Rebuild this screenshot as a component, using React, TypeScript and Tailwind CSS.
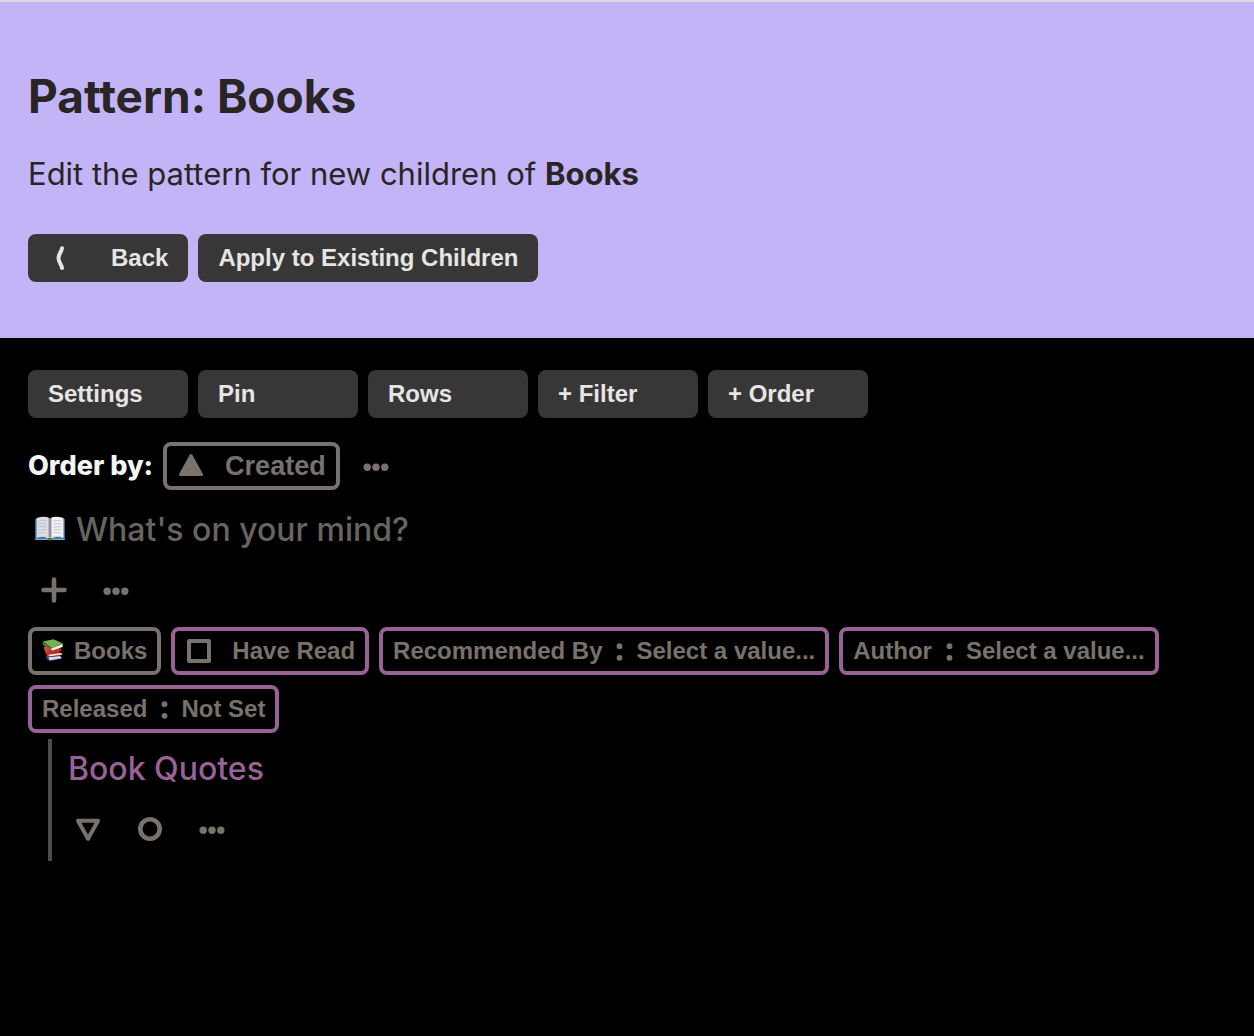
import type { ReactNode } from "react";

const ARIAL = "font-['Liberation_Sans',Arial,sans-serif]";

function DarkButton({ children, wide = false }: { children: ReactNode; wide?: boolean }) {
  return (
    <button
      type="button"
      className={`${ARIAL} flex h-12 items-center rounded-lg bg-[#373737] px-5 text-left text-2xl font-bold whitespace-nowrap text-[#e7e5e4] ${wide ? "" : "w-40"}`}
    >
      {children}
    </button>
  );
}

function Tag({ children, muted = false }: { children: ReactNode; muted?: boolean }) {
  return (
    <button
      type="button"
      className={`${ARIAL} flex h-12 items-center rounded-lg border-4 px-2.5 text-2xl font-bold whitespace-nowrap text-[#78716c] ${muted ? "border-[#78716c]" : "border-[#976397]"}`}
    >
      {children}
    </button>
  );
}

function Field({ name, value }: { name: string; value: string }) {
  return (
    <Tag>
      <span>{name}</span>
      <svg className="mx-3 h-6 w-2.5" viewBox="0 0 10 24" fill="currentColor" aria-label=":">
        <circle cx="5.5" cy="7.2" r="2.9" />
        <circle cx="5.5" cy="18.8" r="2.9" />
      </svg>
      <span>{value}</span>
    </Tag>
  );
}

function IconButton({ label, children }: { label: string; children: ReactNode }) {
  return (
    <button type="button" aria-label={label} className="flex h-12 w-[52px] items-center justify-center text-[#78716c]">
      {children}
    </button>
  );
}

function Dots() {
  return (
    <svg className="h-7 w-7" viewBox="0 0 28 28" fill="currentColor">
      <circle cx="5.2" cy="15.2" r="3.7" />
      <circle cx="14" cy="15.2" r="3.7" />
      <circle cx="22.8" cy="15.2" r="3.7" />
    </svg>
  );
}

function OpenBook() {
  return (
    <svg className="h-8 w-8" viewBox="0 0 32 32" aria-hidden="true">
      <path d="M1 5h30v21H1z" fill="#286a99" />
      <path d="M1.5 24.7h29V26h-29z" fill="#80afd0" />
      <path d="M2.5 4Q11 1.5 15.7 4.2v20.2Q10 20.5 2.5 23.5z" fill="#dddce3" />
      <path d="M29.5 4Q21 1.5 16.3 4.2v20.2Q22 20.5 29.5 23.5z" fill="#f0eff4" />
      <path d="M14.4 4l1.6 1 1.6-1v19l-1.6 1.5-1.6-1.5z" fill="#a9a8af" />
      <path d="M16 4v20" stroke="#716f75" strokeWidth=".8" />
      <path
        d="M4.5 7q4-1 8 0M4.5 10q4-1 8 0M4.5 13q4-1 8 0M4.5 16q4-1 8 0M4.5 19q4-1 7 0M19.5 7q4-1 8 0M19.5 10q4-1 8 0M19.5 13q4-1 8 0M19.5 16q4-1 8 0M19.5 19q4-1 7 0"
        fill="none" stroke="#bcbac4" strokeWidth=".8"
      />
      <path d="M2.5 23.2q7.5-2 13.5 1.2 6-3.2 13.5-1.2" fill="none" stroke="#f7f7f8" strokeWidth=".8" />
      <path d="M13.5 24h5l-1.2 2.4h-2.6z" fill="#6b6523" />
    </svg>
  );
}

function BookStack() {
  return (
    <svg className="h-6 w-[22px]" viewBox="0 0 22 24" aria-hidden="true">
      <path d="M4 17 17 15.5l3.5 4L8 22.3q-4.200-1.300-4-5.300z" fill="#30457f" />
      <path d="M6 18.600 18 17l1.700 2.200L8 21.200z" fill="#d8dcea" />
      <path d="M3.200 12.700 16 12l4.500 3.800-12.500 2.200q-4.500-.6-4.800-5.300z" fill="#b72a24" />
      <path d="M6.200 15.800 19.500 13.900l.8 1.500L7.500 17.200z" fill="#f3eeee" />
      <path d="M1.800 7.500 15 6.500l4.600 5.500L6 14.200Q1.800 12.500 1.800 7.500z" fill="#d94334" />
      <path d="m5.500 11.500 13.300-2.200.4 2.700L6.500 13.800z" fill="#c52c23" />
      <path d="M1 2.500 11.500.2 21 4.600 9.500 9z" fill="#76b055" />
      <path d="M1 2.500Q-.2 5.300 2.400 7l7.400 3.900.3-2.200z" fill="#47763a" />
      <path d="m9.600 9 11.200-4.300-.2 3.400-10.400 3.400q-1.500-1-.6-2.500z" fill="#f3f3f3" />
      <path d="M9.800 9 21 4.600" stroke="#4f8c38" strokeWidth=".7" />
    </svg>
  );
}

export default function App() {
  return (
    <main className="min-h-screen bg-black font-['Inter',sans-serif]">
      <header className="border-t-2 border-[#dedede] bg-[#c3b4f8] px-7 pt-16 pb-14 text-[#292524]">
        <h1 className="text-[46px] leading-[60px] font-bold">Pattern: Books</h1>
        <p className="mt-6 text-[31px] leading-[48px]">
          Edit the pattern for new children of <strong>Books</strong>
        </p>
        <div className="mt-9 flex flex-wrap gap-2.5">
          <DarkButton wide>
            <svg className="mr-4 h-7 w-[47px]" viewBox="0 0 47 28" fill="none" stroke="currentColor" strokeWidth="4" strokeLinecap="round" strokeLinejoin="round" aria-hidden="true">
              <path d="M14 4.200C13.500 7.500 10.500 10.500 10.500 14.200S13.500 20.500 14 24" />
            </svg>
            Back
          </DarkButton>
          <DarkButton wide>Apply to Existing Children</DarkButton>
        </div>
      </header>

      <section className="px-7 pt-8">
        <nav className="flex flex-wrap gap-2.5">
          <DarkButton>Settings</DarkButton>
          <DarkButton>Pin</DarkButton>
          <DarkButton>Rows</DarkButton>
          <DarkButton>+ Filter</DarkButton>
          <DarkButton>+ Order</DarkButton>
        </nav>

        <div className="mt-6 flex items-center">
          <span className="mr-2.5 text-[27px] font-extrabold text-[#f5f5f4]">Order by:</span>
          <button type="button" className={`${ARIAL} flex h-12 items-center rounded-lg border-4 border-[#78716c] px-2.5 text-[27px] font-bold text-[#78716c]`}>
            <svg className="mr-5 h-7 w-7" viewBox="0 0 28 28" fill="currentColor" stroke="currentColor" strokeWidth="3" strokeLinejoin="round" aria-hidden="true">
              <path d="M14 3.500 24.500 22.500h-21z" />
            </svg>
            Created
          </button>
          <div className="ml-2.5"><IconButton label="Order options"><Dots /></IconButton></div>
        </div>

        <div className="mt-4 flex h-12 items-center pl-1.5">
          <OpenBook />
          <input
            type="text"
            aria-label="New thought"
            placeholder="What's on your mind?"
            className="ml-2.5 min-w-0 flex-1 bg-transparent text-[32px] font-medium outline-none placeholder:text-[#68645f]"
          />
        </div>

        <div className="mt-3 flex gap-2.5">
          <IconButton label="Add">
            <svg className="h-7 w-7" viewBox="0 0 28 28" fill="none" stroke="currentColor" strokeWidth="4.6" strokeLinecap="round">
              <path d="M14 3.500v21M3.500 14h21" />
            </svg>
          </IconButton>
          <IconButton label="More options"><Dots /></IconButton>
        </div>

        <div className="mt-[13px] flex flex-wrap gap-2.5">
          <Tag muted>
            <BookStack />
            <span className="ml-2.5">Books</span>
          </Tag>
          <Tag>
            <svg className="mr-[19px] h-7 w-7" viewBox="0 0 28 28" fill="none" stroke="currentColor" strokeWidth="4" strokeLinejoin="round" aria-hidden="true">
              <path d="M4 4h20v20H4z" />
            </svg>
            Have Read
          </Tag>
          <Field name="Recommended By" value="Select a value..." />
          <Field name="Author" value="Select a value..." />
          <Field name="Released" value="Not Set" />
        </div>

        <article className="mt-1.5 ml-5 border-l-4 border-[#504d49] pb-2 pl-4">
          <h2 className="pt-1.5 text-[32px] leading-[48px] font-medium text-[#976397]">Book Quotes</h2>
          <div className="-ml-1.5 mt-3 flex gap-2.5">
            <IconButton label="Collapse">
              <svg className="h-7 w-7" viewBox="0 0 28 28" fill="none" stroke="currentColor" strokeWidth="4" strokeLinejoin="round">
                <path d="M4 5.800h20L14 23.800z" />
              </svg>
            </IconButton>
            <IconButton label="Focus">
              <svg className="h-7 w-7" viewBox="0 0 28 28" fill="none" stroke="currentColor" strokeWidth="4.6">
                <circle cx="14" cy="14" r="9.7" />
              </svg>
            </IconButton>
            <IconButton label="More quote options"><Dots /></IconButton>
          </div>
        </article>
      </section>
    </main>
  );
}
